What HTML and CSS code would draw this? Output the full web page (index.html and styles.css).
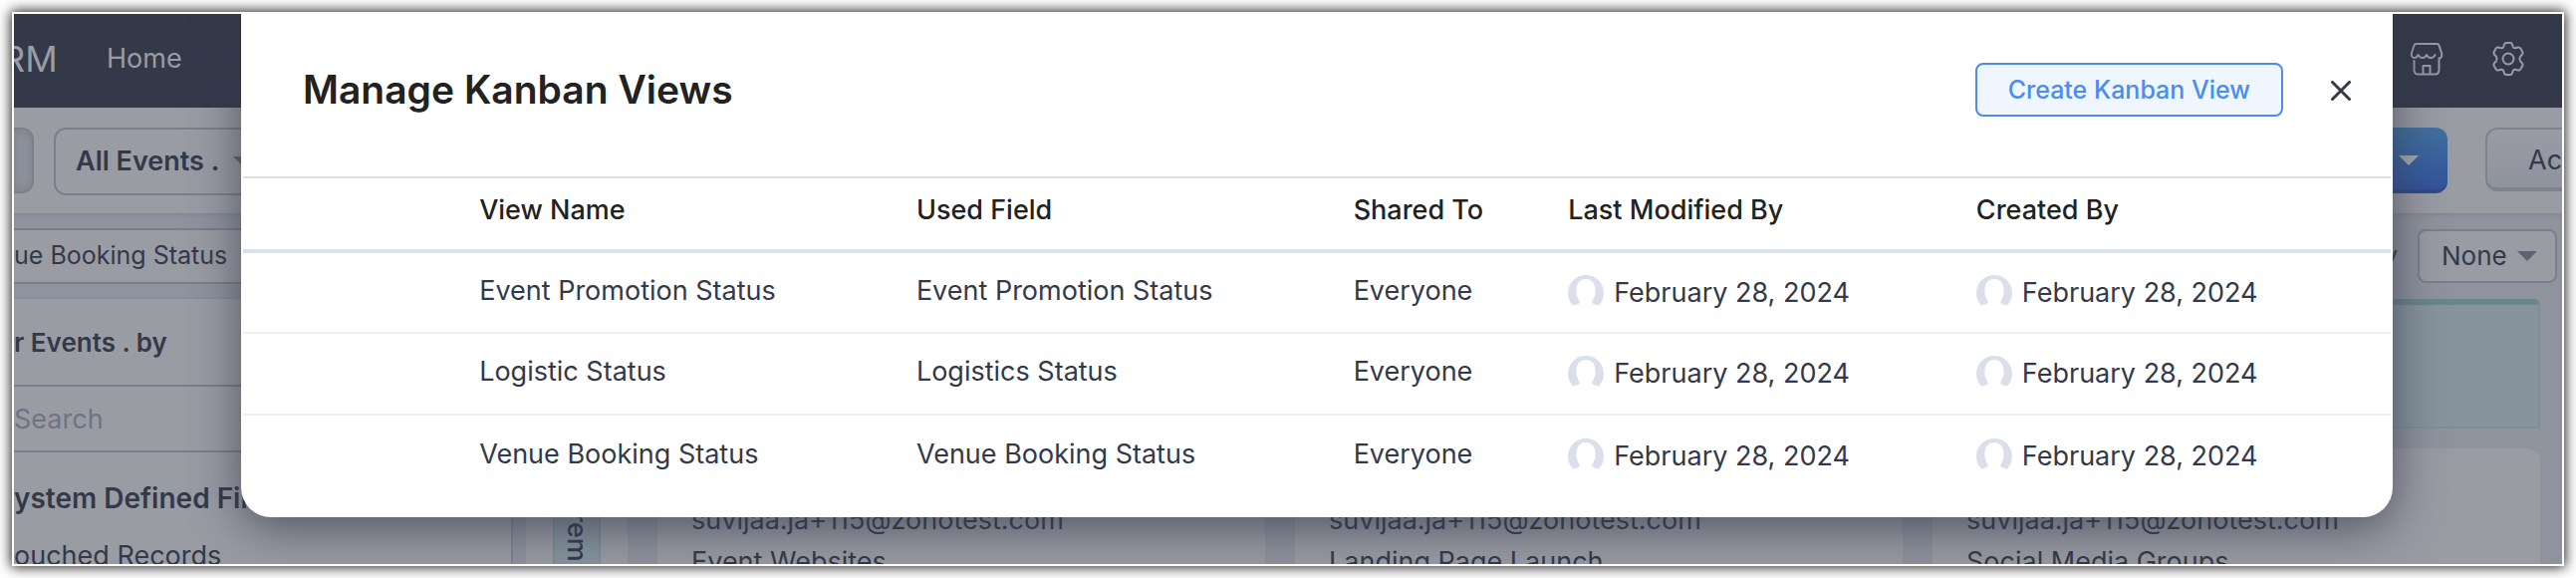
FILE: index.html
```html
<!DOCTYPE html>
<html lang="en">
<head>
<meta charset="utf-8">
<title>Manage Kanban Views</title>
<link rel="stylesheet" href="styles.css">
</head>
<body>
<div class="frame">
  <div class="app" aria-hidden="true">
    <header class="nav">
      <span class="brand">RM</span>
      <a class="nav-link" href="#">Home</a>
      <div class="nav-icons">
        <svg class="icon" viewBox="0 0 36 36"><path d="M8 3h20c1.500 0 2.300.6 2.700 2L33 12c.8 3-.2 5.500-2.500 5.500M8 3C6.500 3 5.700 3.600 5.300 5L3 12c-.8 3 .5 5 2.500 5s3.500-1.500 4-3c.8 2 2.300 3 4.300 3s3.500-1 4.200-3c.7 2 2.200 3 4.200 3s3.600-1 4.300-3M5.500 20v9c0 3 1.500 4.500 4.500 4.500h16c3 0 4.500-1.500 4.500-4.500V17.500M14.500 33V25h7v8"/></svg>
        <svg class="icon" viewBox="0 0 36 36"><circle cx="18" cy="18" r="5.500"/><path d="M16 2h4q1.500 0 2 1.500l.8 2.500q.6 1.500 2.200 1.200l3-.7q1.500-.3 2.300 1l2 3.500q.8 1.400-.2 2.500l-2 2.200q-1.500 2.300 0 4.600l2 2.200q1 1.100.2 2.500l-2 3.500q-.8 1.300-2.300 1l-3-.7q-1.600-.3-2.200 1.200l-.8 2.500q-.5 1.500-2 1.500h-4q-1.500 0-2-1.500l-.8-2.500q-.6-1.500-2.200-1.200l-3 .7q-1.500.3-2.300-1l-2-3.500q-.8-1.400.2-2.500l2-2.200q1.500-2.300 0-4.600l-2-2.200q-1-1.100-.2-2.500l2-3.500q.8-1.300 2.300-1l3 .7q1.600.3 2.200-1.200l.8-2.500q.5-1.500 2-1.500z"/></svg>
      </div>
    </header>
    <div class="toolbar">
      <button class="toggle" type="button" tabindex="-1"></button>
      <button class="view-picker" type="button" tabindex="-1">All Events . <span class="caret"></span></button>
      <div class="toolbar-end">
        <button class="create" type="button" tabindex="-1"><span class="caret caret-light"></span></button>
        <button class="actions" type="button" tabindex="-1">Ac</button>
      </div>
    </div>
    <div class="filterbar">
      <button class="field-picker" type="button" tabindex="-1">ue Booking Status</button>
      <div class="sort"><span>By</span><button class="sort-picker" type="button" tabindex="-1">None <span class="caret"></span></button></div>
    </div>
    <div class="board">
      <aside class="sidebar">
        <h2 class="side-title">r Events . by</h2>
        <input class="search" type="text" placeholder="Search" aria-label="Search" tabindex="-1">
        <h3 class="side-group">ystem Defined Filters</h3>
        <p class="side-item">ouched Records</p>
      </aside>
      <div class="collapsed"><div class="collapsed-label">rem</div></div>
      <section class="column"><div class="column-head"></div><div class="card"><p>suvijaa.ja+115@zohotest.com</p><p>Event Websites</p></div></section>
      <section class="column"><div class="column-head"></div><div class="card"><p>suvijaa.ja+115@zohotest.com</p><p>Landing Page Launch</p></div></section>
      <section class="column"><div class="column-head"></div><div class="card"><p>suvijaa.ja+115@zohotest.com</p><p>Social Media Groups</p></div></section>
    </div>
  </div>

  <svg class="defs" aria-hidden="true"><symbol id="avatar" viewBox="0 0 36 32"><path d="M5 30.500C2 27.500 0 23 0 18a18 18 0 0 1 36 0c0 5-2 9.500-5 12.500-3-.8-6-1.200-6.500-2.500-1-2 2.500-4.500 3-10C28 9.500 25 4 18 4S8 9.500 8.500 18c.5 5.500 4 8 3 10-.5 1.300-3.500 1.700-6.500 2.500z"/></symbol></svg>

  <div class="modal" role="dialog" aria-labelledby="modal-title">
    <div class="modal-head">
      <h1 class="modal-title" id="modal-title">Manage Kanban Views</h1>
      <button class="create-view" type="button">Create Kanban View</button>
      <button class="close" type="button" aria-label="Close"><svg class="close-icon" viewBox="0 0 20 20"><path d="M1.500 1.500l17 17M18.500 1.500l-17 17"/></svg></button>
    </div>
    <table class="views">
      <colgroup><col class="c-lead"><col class="c-name"><col class="c-field"><col class="c-shared"><col class="c-modified"><col></colgroup>
      <thead>
        <tr><th></th><th>View Name</th><th>Used Field</th><th>Shared To</th><th>Last Modified By</th><th>Created By</th></tr>
      </thead>
      <tbody>
        <tr><td></td><td>Event Promotion Status</td><td>Event Promotion Status</td><td>Everyone</td>
          <td><span class="stamp"><svg class="avatar"><use href="#avatar"/></svg>February 28, 2024</span></td>
          <td><span class="stamp"><svg class="avatar"><use href="#avatar"/></svg>February 28, 2024</span></td></tr>
        <tr><td></td><td>Logistic Status</td><td>Logistics Status</td><td>Everyone</td>
          <td><span class="stamp"><svg class="avatar"><use href="#avatar"/></svg>February 28, 2024</span></td>
          <td><span class="stamp"><svg class="avatar"><use href="#avatar"/></svg>February 28, 2024</span></td></tr>
        <tr><td></td><td>Venue Booking Status</td><td>Venue Booking Status</td><td>Everyone</td>
          <td><span class="stamp"><svg class="avatar"><use href="#avatar"/></svg>February 28, 2024</span></td>
          <td><span class="stamp"><svg class="avatar"><use href="#avatar"/></svg>February 28, 2024</span></td></tr>
      </tbody>
    </table>
  </div>
</div>
</body>
</html>
```
FILE: styles.css
```css
* { box-sizing: border-box; }
body {
  margin: 0;
  padding: 12px;
  background: #fff;
  color: #333949;
  font-family: Inter, "Liberation Sans", sans-serif;
  font-size: 27px;
  line-height: 36px;
}
button, input { font: inherit; color: inherit; }
h1, h2, h3, p { margin: 0; }

.frame {
  position: relative;
  height: calc(100vh - 24px);
  border: 2px solid #fff;
  box-shadow: 0 0 12px 1px rgba(0, 0, 0, .9);
  overflow: hidden;
}
.app { background: #8f939e; }

.nav {
  display: flex;
  align-items: center;
  height: 94px;
  padding: 0 36px 4px 0;
  background: #333949;
  color: #9a9ca4;
}
.brand { width: 92px; margin-left: -12px; font-size: 36px; }
.nav-link { margin-left: 13px; color: inherit; text-decoration: none; }
.nav-icons { display: flex; gap: 46px; margin-left: auto; }
.icon { width: 36px; height: 36px; fill: none; stroke: #9a9ca4; stroke-width: 2; stroke-linejoin: round; stroke-linecap: round; }

.toolbar {
  display: flex;
  align-items: flex-start;
  height: 106px;
  padding-top: 20px;
  background: #9a9ca4;
}
.toggle {
  width: 20px;
  height: 66px;
  border: 2px solid #7c7f8a;
  border-left: 0;
  border-radius: 0 12px 12px 0;
  background: #8f939e;
  box-shadow: inset 0 0 12px #7c7f8a;
}
.view-picker {
  display: flex;
  align-items: center;
  gap: 14px;
  width: 240px;
  height: 68px;
  margin-left: 20px;
  padding: 0 20px;
  border: 2px solid #7c7f8a;
  border-radius: 12px;
  background: none;
  font-weight: 600;
}
.caret {
  border: 10px solid transparent;
  border-top: 10px solid #5f6370;
  border-bottom: 0;
}
.caret-light { border-top-color: #a9abb3; }
.toolbar-end { display: flex; margin-left: auto; }
.create {
  display: flex;
  align-items: center;
  justify-content: flex-end;
  width: 120px;
  height: 66px;
  padding: 4px 29px 0 0;
  border: 0;
  border-bottom: 4px solid #2f4a86;
  border-radius: 12px;
  background: linear-gradient(#40709f, #32539b);
}
.actions {
  width: 77px;
  height: 64px;
  margin-left: 38px;
  padding: 3px 0 0 41px;
  border: 2px solid #7f838e;
  border-right: 0;
  border-bottom-width: 4px;
  border-radius: 12px 0 0 12px;
  background: linear-gradient(#9a9ca4, #8f939e);
  text-align: left;
  overflow: hidden;
}

.filterbar {
  display: flex;
  justify-content: space-between;
  align-items: flex-start;
  height: 84px;
  padding: 15px 5px 0 0;
  font-size: 26px;
  box-shadow: inset 0 5px 5px -4px #7f838e;
}
.field-picker {
  width: 260px;
  height: 56px;
  padding: 0 0 2px;
  border: 2px solid #7a7e89;
  border-left: 0;
  background: #9a9ca4;
  font-size: 25px;
  text-align: left;
}
.sort { display: flex; align-items: center; gap: 20px; padding-top: 1px; }
.sort-picker {
  display: flex;
  align-items: center;
  justify-content: space-between;
  width: 140px;
  height: 54px;
  padding: 0 18px 0 22px;
  border: 2px solid #7c7f8a;
  border-radius: 8px;
  background: #9a9ca4;
}

.board { display: flex; height: 300px; }
.sidebar {
  width: 501px;
  border-top: 2px solid #8490a3;
  border-right: 2px solid #7f8591;
  background: #9a9ca4;
}
.side-title { padding: 26px 0 24px; font-size: 26px; font-weight: 600; }
.search {
  display: block;
  width: 480px;
  height: 68px;
  padding: 0;
  border: 2px solid #7a7e89;
  border-left: 0;
  background: none;
}
.search::placeholder { color: #6f7382; opacity: 1; }
.side-group { padding: 28px 0 22px; font-size: 28px; font-weight: 600; }
.collapsed { width: 102px; margin-left: 13px; padding: 0 27px; background: #9a9ca4; }
.collapsed-label {
  height: 100%;
  padding-top: 214px;
  border: 2px solid #7c8e96;
  background: #87949d;
  writing-mode: vertical-rl;
  font-weight: 500;
  line-height: 44px;
}
.column { flex: 1; margin-left: 30px; }
.column:last-child { margin-right: 22px; }
.column-head {
  height: 130px;
  margin: 2px 0 20px;
  border: 2px solid #7c8e96;
  border-top: 6px solid #6b858c;
  border-radius: 6px 6px 0 0;
  background: #87949d;
}
.card { height: 200px; padding: 51px 34px 0; border-radius: 12px; background: #9a9ca4; line-height: 42px; }

.defs { position: absolute; width: 0; height: 0; }

.modal {
  position: absolute;
  top: 0;
  left: 228px;
  right: 170px;
  padding: 0 2px 21px;
  border-radius: 0 0 30px 30px;
  background: #fff;
  box-shadow: 0 10px 50px rgba(51, 57, 73, .75);
}
.modal-head {
  display: flex;
  align-items: center;
  padding: 49px 38px 60px 60px;
}
.modal-title { color: #222; font-size: 39px; font-weight: 600; line-height: 54px; margin-right: auto; }
.create-view {
  height: 54px;
  padding: 0 31px;
  border: 2px solid #4c8ced;
  border-radius: 8px;
  background: #eff6ff;
  color: #4c8ced;
  font-size: 25px;
  font-weight: 500;
}
.close { display: flex; margin-left: 48px; padding: 2px 2px 0 0; border: 0; background: none; }
.close-icon { width: 20px; height: 20px; fill: none; stroke: #333949; stroke-width: 3; stroke-linecap: round; }

.views { width: 100%; border-collapse: collapse; table-layout: fixed; border-top: 2px solid #d9e1ed; }
.c-lead { width: 11%; }
.c-name, .c-field { width: 20.35%; }
.c-shared { width: 10%; }
.c-modified { width: 19%; }
.views th { height: 74px; padding: 0 0 8px; border-bottom: 4px solid #d9e1ed; color: #222; font-weight: 500; text-align: left; }
.views td { height: 82px; padding: 0 0 4px; }
.views tbody tr + tr { border-top: 2px solid #edeef4; }
.stamp { display: flex; align-items: flex-start; gap: 10px; padding-top: 4px; }
.avatar { width: 36px; height: 32px; fill: #dadfe9; }
```
